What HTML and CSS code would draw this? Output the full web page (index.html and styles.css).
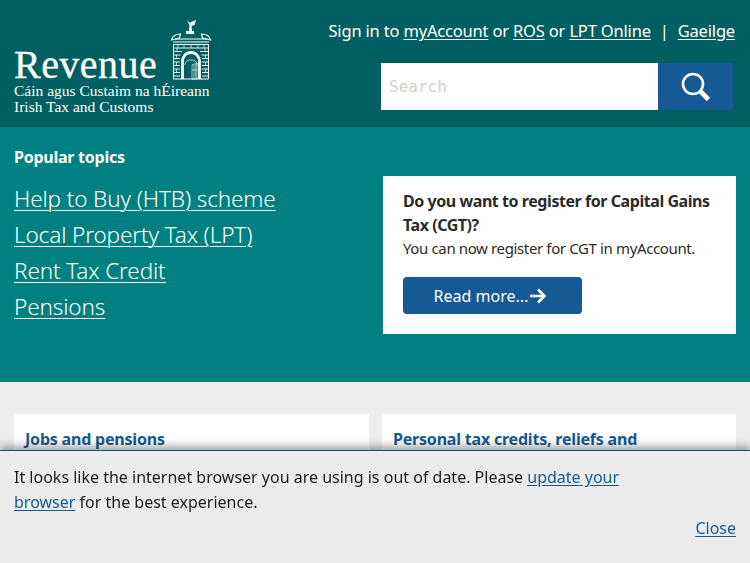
FILE: index.html
```html
<!DOCTYPE html>
<html lang="en">
<head>
<meta charset="utf-8">
<title>Revenue</title>
<link rel="stylesheet" href="styles.css">
</head>
<body>
<header class="site-header">
  <a class="logo" href="#">
    <div class="logo-top">
      <span class="logo-name">Revenue</span>
      <svg class="logo-arch" width="42" height="62" viewBox="0 0 42 62" fill="none" stroke="#fff">
        <path d="M19 13l.5-6-2.500-5 3 3 1-1 5-2-1.500 5-3 1 .5 5h2v3h-8v-3z" fill="#fff" stroke="none"/>
        <path d="M1.500 22c1-4 5-6 9-6l-1 4-4 1zM40.500 22c-1-4-5-6-9-6l1 4 4 1z" stroke-width="1.100"/>
        <path d="M5 21h32M3 24h36M3 26.500h36" stroke-width="1"/>
        <path d="M3.500 26v35h35V26" stroke-width="1"/>
        <path d="M3 30h36M3 33.500h9M3 37h7.500M3 40.500h7M3 44h7M3 47.500h7M3 51h7M3 54.500h7M3 58h7M39 33.500h-9M39 37h-7.500M39 40.500h-7M39 44h-7M39 47.500h-7M39 51h-7M39 54.500h-7M39 58h-7" stroke-width=".9"/>
        <path d="M8 26.500v3.500M14 26.500v3.500M21 26.500v3.500M28 26.500v3.500M34 26.500v3.500M7 30v3.500M35 30v3.500M6.500 37v3.500M6.500 44v3.500M6.500 51v3.500M35.500 37v3.500M35.500 44v3.500M35.500 51v3.500" stroke-width=".7"/>
        <path d="M12.500 61V44c0-5.500 3.500-9.500 8.500-9.500s8.500 4 8.500 9.500v17" stroke-width="2.800"/>
        <path d="M15 47c0-3 2-5 6-5s6 2 6 5" stroke-width=".7"/>
        <path d="M22 47l5-2v16h-5zM24 46.500V61M25.800 46V61M22 52h5" stroke-width=".6"/>
      </svg>
    </div>
    <span class="logo-line">Cáin agus Custaim na hÉireann</span>
    <span class="logo-line">Irish Tax and Customs</span>
  </a>
  <div class="header-right">
    <p class="signin">Sign in to <a href="#">myAccount</a> or <a href="#">ROS</a> or <a href="#">LPT Online</a><span class="sep">|</span><a href="#">Gaeilge</a></p>
    <form class="search">
      <input class="search-input" type="text" placeholder="Search">
      <button class="search-btn" type="button" aria-label="Search">
        <svg width="32" height="32" viewBox="0 0 32 32" fill="none" stroke="#fff">
          <circle cx="13" cy="13" r="10" stroke-width="2.600"/>
          <path d="M20.500 20.500l8 8" stroke-width="4.600"/>
        </svg>
      </button>
    </form>
  </div>
</header>

<section class="topics">
  <div class="topics-list">
    <h2 class="topics-title">Popular topics</h2>
    <ul class="links">
      <li><a href="#">Help to Buy (HTB) scheme</a></li>
      <li><a href="#">Local Property Tax (LPT)</a></li>
      <li><a href="#">Rent Tax Credit</a></li>
      <li><a href="#">Pensions</a></li>
    </ul>
  </div>
  <aside class="promo">
    <h3 class="promo-title">Do you want to register for Capital Gains Tax (CGT)?</h3>
    <p class="promo-text">You can now register for CGT in myAccount.</p>
    <a class="promo-btn" href="#">Read more...<svg width="18" height="16" viewBox="0 0 18 16" fill="none" stroke="#fff" stroke-width="2.600"><path d="M1 8h14M9 1.500L15.500 8 9 14.500"/></svg></a>
  </aside>
</section>

<section class="cards">
  <article class="card"><h3>Jobs and pensions</h3></article>
  <article class="card"><h3>Personal tax credits, reliefs and exemptions</h3></article>
</section>

<div class="notice">
  <p>It looks like the internet browser you are using is out of date. Please <a href="#">update your browser</a> for the best experience.</p>
  <a class="notice-close" href="#">Close</a>
</div>
</body>
</html>
```
FILE: styles.css
```css
* { box-sizing: border-box; }
html, body { margin: 0; padding: 0; }
body {
  font-family: "Noto Sans", "Open Sans", sans-serif;
  background: #ecedef;
  color: #1c1c1c;
  height: 563px;
  overflow: hidden;
}
a { color: inherit; }
.site-header {
  height: 127px;
  background: #005f61;
  display: flex;
  justify-content: space-between;
  padding: 18px 14px 0;
  color: #fff;
}
.logo {
  display: flex;
  flex-direction: column;
  text-decoration: none;
  font-family: "Liberation Serif", serif;
  width: 200px;
}
.logo-top { display: flex; align-items: flex-end; height: 64px; margin-bottom: 1px; }
.logo-name {
  font-size: 40px;
  line-height: 34px;
  letter-spacing: 0.45px;
  width: 156px;
  -webkit-text-stroke: 0.3px #fff;
}
.logo-arch { flex: none; margin-bottom: 2px; }
.logo-line { font-size: 15.500px; line-height: 16px; white-space: nowrap; }
.header-right { display: flex; flex-direction: column; align-items: flex-end; }
.signin { margin: 1px 1px 0 0; font-size: 16.500px; line-height: 24px; letter-spacing: -0.18px; white-space: nowrap; }
.signin a { text-underline-offset: 2px; }
.sep { margin: 0 9px; }
.search { display: flex; margin: 20px 3px 0 0; height: 47px; }
.search-input {
  width: 277px;
  border: 0;
  padding: 0 8px;
  background: #fff;
  font-family: "DejaVu Sans Mono", monospace;
  font-size: 16px;
}
.search-input::placeholder { color: #d0d0cc; opacity: 1; }
.search-btn {
  width: 75px;
  border: 0;
  padding: 0;
  background: #155a94;
  display: flex;
  align-items: center;
  justify-content: center;
}
.topics {
  height: 255px;
  background: #008080;
  display: flex;
  justify-content: space-between;
  padding: 0 14px;
  color: #fff;
}
.topics-title { margin: 19px 0 0; font-size: 16px; line-height: 22px; font-weight: 700; letter-spacing: -0.25px; }
.links { list-style: none; margin: 13px 0 0; padding: 0; font-size: 22.500px; font-weight: 300; line-height: 36px; letter-spacing: -0.12px; }
.links a { text-underline-offset: 3px; text-decoration-thickness: 1px; }
.promo {
  width: 353px;
  height: 158px;
  margin-top: 49px;
  background: #fff;
  padding: 13px 20px 0;
  color: #2b2b2b;
}
.promo-title { margin: 0; font-size: 16px; line-height: 24px; font-weight: 700; letter-spacing: -0.44px; }
.promo-text { margin: -1px 0 0; font-size: 15px; line-height: 24px; letter-spacing: -0.37px; }
.promo-btn {
  margin-top: 17px;
  width: 179px;
  height: 37px;
  background: #155a94;
  border-radius: 4px;
  color: #fff;
  text-decoration: none;
  font-size: 16px;
  display: flex;
  align-items: center;
  justify-content: center;
  gap: 1px;
  padding-right: 4px;
}
.cards {
  display: grid;
  grid-template-columns: 355px 354px;
  gap: 13px;
  padding: 32px 14px 0;
}
.card { background: #fff; height: 149px; padding: 14px 11px; overflow: hidden; }
.card h3 { margin: 0; font-size: 16px; line-height: 22px; font-weight: 700; color: #155a94; letter-spacing: -0.2px; }
.notice {
  position: fixed;
  left: 0;
  right: 0;
  bottom: 0;
  height: 113px;
  background: #ececec;
  border-top: 1px solid #005f61;
  box-shadow: 0 -4px 8px rgba(0, 0, 0, 0.35);
  padding: 14px 14px 0;
  color: #1c1c1c;
}
.notice p { margin: 0; width: 640px; font-size: 16px; line-height: 25px; }
.notice a { color: #155a94; text-underline-offset: 2px; }
.notice-close { position: absolute; right: 14px; top: 65px; font-size: 16px; line-height: 24px; }
```
